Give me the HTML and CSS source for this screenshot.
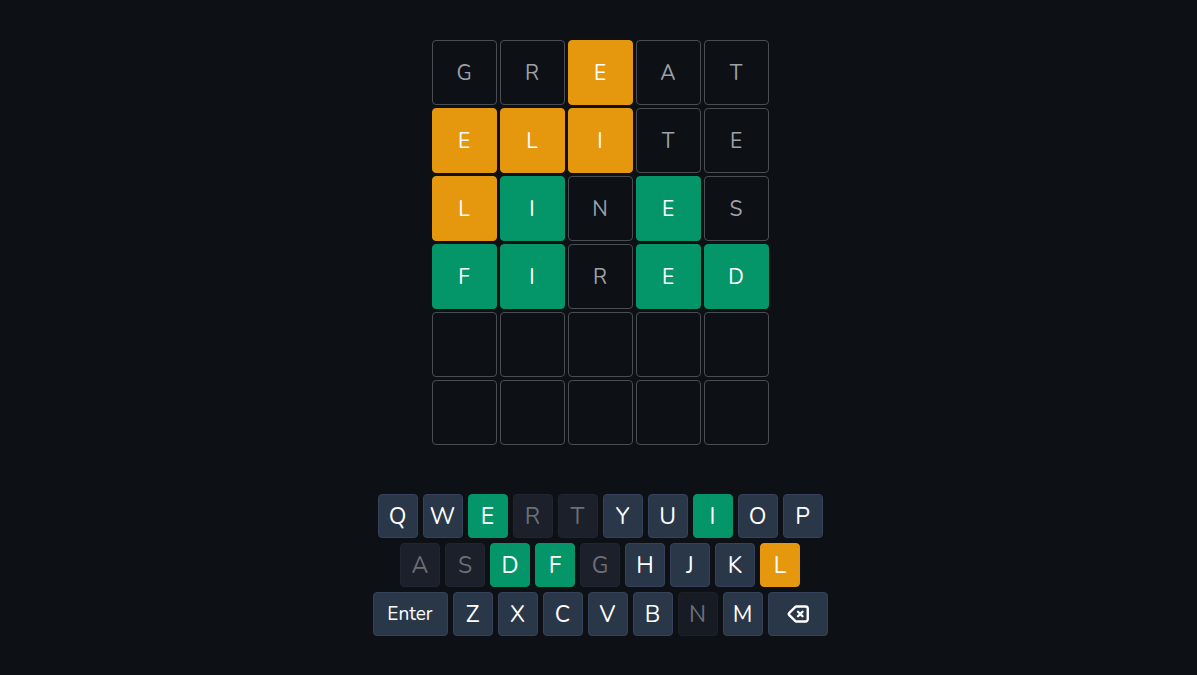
FILE: index.html
```html
<!DOCTYPE html>
<html lang="en">
<head>
<meta charset="utf-8">
<title>Wordle</title>
<link rel="stylesheet" href="styles.css">
</head>
<body>
<main class="game">
  <div class="board">
    <div class="tile">G</div><div class="tile">R</div><div class="tile present">E</div><div class="tile">A</div><div class="tile">T</div>
    <div class="tile present">E</div><div class="tile present">L</div><div class="tile present">I</div><div class="tile">T</div><div class="tile">E</div>
    <div class="tile present">L</div><div class="tile correct">I</div><div class="tile">N</div><div class="tile correct">E</div><div class="tile">S</div>
    <div class="tile correct">F</div><div class="tile correct">I</div><div class="tile">R</div><div class="tile correct">E</div><div class="tile correct">D</div>
    <div class="tile"></div><div class="tile"></div><div class="tile"></div><div class="tile"></div><div class="tile"></div>
    <div class="tile"></div><div class="tile"></div><div class="tile"></div><div class="tile"></div><div class="tile"></div>
  </div>
  <div class="keyboard">
    <div class="krow">
      <button class="key">Q</button><button class="key">W</button><button class="key correct">E</button><button class="key absent">R</button><button class="key absent">T</button><button class="key">Y</button><button class="key">U</button><button class="key correct">I</button><button class="key">O</button><button class="key">P</button>
    </div>
    <div class="krow">
      <button class="key absent">A</button><button class="key absent">S</button><button class="key correct">D</button><button class="key correct">F</button><button class="key absent">G</button><button class="key">H</button><button class="key">J</button><button class="key">K</button><button class="key present">L</button>
    </div>
    <div class="krow">
      <button class="key enter">Enter</button><button class="key">Z</button><button class="key">X</button><button class="key">C</button><button class="key">V</button><button class="key">B</button><button class="key absent dim">N</button><button class="key">M</button><button class="key back" aria-label="Backspace"><svg width="24" height="24" viewBox="0 0 24 24" fill="none" stroke="currentColor" stroke-width="2.4" stroke-linecap="round" stroke-linejoin="round"><path d="M12 9.75 14.25 12m0 0 2.25 2.25M14.25 12l2.25-2.25M14.25 12 12 14.25m-2.58 4.92-6.374-6.375a1.125 1.125 0 0 1 0-1.59L9.42 4.83c.21-.211.497-.33.795-.33H19.5a2.25 2.25 0 0 1 2.25 2.25v10.5a2.25 2.25 0 0 1-2.25 2.25h-9.284c-.298 0-.585-.119-.795-.33Z"/></svg></button>
    </div>
  </div>
</main>
</body>
</html>
```

FILE: styles.css
```css
html, body {
  margin: 0;
  padding: 0;
  background: #0d1015;
  height: 100%;
}

body {
  font-family: "Nunito", "Lato", "Noto Sans", sans-serif;
}

.game {
  display: flex;
  flex-direction: column;
  align-items: center;
  padding-top: 40px;
  padding-left: 3px;
}

.board {
  display: grid;
  grid-template-columns: repeat(5, 65px);
  grid-auto-rows: 65px;
  gap: 3px;
}

.tile {
  box-sizing: border-box;
  border: 1px solid #4a4d53;
  border-radius: 4px;
  background: #0d1015;
  color: #9da1a8;
  display: flex;
  align-items: center;
  justify-content: center;
  font-size: 21px;
  font-weight: 400;
}

.tile.present {
  background: #e5970e;
  border-color: #e5970e;
  color: #ffffff;
}

.tile.correct {
  background: #049669;
  border-color: #049669;
  color: #ffffff;
}

.keyboard {
  margin-top: 49px;
  display: flex;
  flex-direction: column;
  gap: 5px;
}

.krow {
  display: flex;
  justify-content: center;
  gap: 5px;
}

.key {
  box-sizing: border-box;
  width: 40px;
  height: 44px;
  border: 1px solid #36425a;
  border-radius: 4px;
  background: #2a3749;
  color: #ffffff;
  font-family: inherit;
  font-size: 23px;
  padding: 0;
  display: flex;
  align-items: center;
  justify-content: center;
}

.key.absent {
  background: #1b202a;
  border-color: #1f2531;
  color: #6b6f76;
}

.key.dim {
  background: #171b23;
  border-color: #1b2029;
}

.key.correct {
  background: #049669;
  border-color: #049669;
}

.key.present {
  background: #e5970e;
  border-color: #e5970e;
}

.key.enter {
  width: 75px;
  font-size: 19px;
}

.key.back {
  width: 60px;
}
```
